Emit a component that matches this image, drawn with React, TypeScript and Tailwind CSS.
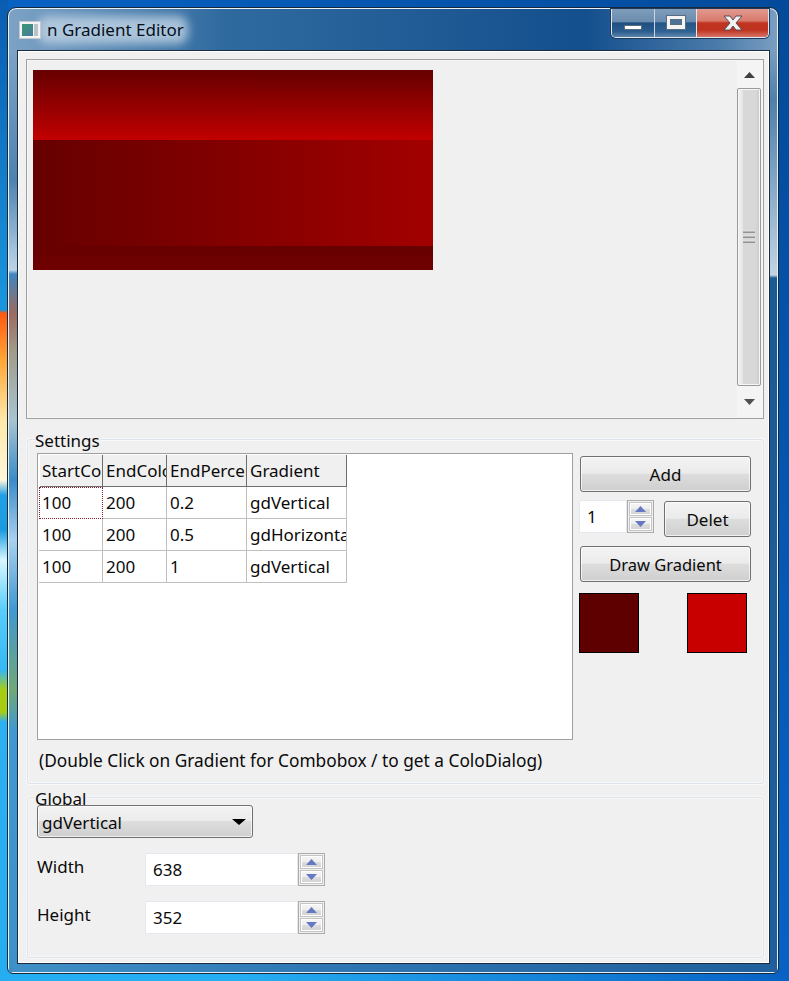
const rows = [
  ['100', '200', '0.2', 'gdVertical'],
  ['100', '200', '0.5', 'gdHorizontal'],
  ['100', '200', '1', 'gdVertical'],
];
const headers = ['StartColor', 'EndColor', 'EndPercent', 'Gradient'];
const colWidths = ['w-[64px]', 'w-[64px]', 'w-[80px]', 'w-[100px]'];
const headerWidths = ['w-[63px] pl-[2px]', 'w-[64px] pl-[3px]', 'w-[80px] pl-[3px]', 'w-[100px] pl-[3px]'];

const btnBg = 'bg-[linear-gradient(#f3f3f3,#ebebeb_48%,#dddddd_50%,#cfcfcf)] border border-[#707070] rounded-[3px] shadow-[inset_0_0_0_1px_#ffffffb0]';

function Button({ label, className }: { label: string; className: string }) {
  return <button className={`${btnBg} flex items-center justify-center pt-[2px] ${className}`}>{label}</button>;
}

function SpinButton({ up }: { up?: boolean }) {
  return (
    <div className="flex-1 flex items-center justify-center border border-[#c4c4c4] bg-[linear-gradient(#f6f6f6,#eeeeee_48%,#dddddd_50%,#d2d2d2)] shadow-[inset_0_0_0_1px_#ffffff]">
      <svg width="11" height="6" viewBox="0 0 11 6">
        <path d={up ? 'M5.5 0 L11 6 L0 6 Z' : 'M0 0 L11 0 L5.5 6 Z'} fill="#6478c4" />
      </svg>
    </div>
  );
}

function Spin({ value, className, boxWidth }: { value: string; className: string; boxWidth: string }) {
  return (
    <div className={`flex h-[33px] ${className}`}>
      <div className="flex-1 bg-white border border-[#e3e9ef] rounded-l-[2px] pl-[7px] leading-[31px]">{value}</div>
      <div className={`${boxWidth} flex flex-col border border-[#ababab] p-px gap-px`}>
        <SpinButton up />
        <SpinButton />
      </div>
    </div>
  );
}

function Group({ title, className, children }: { title: string; className: string; children: React.ReactNode }) {
  return (
    <div className={`relative ml-px border border-[#dce3ea] rounded-[3px] shadow-[inset_0_0_0_1px_#f8f8f8,0_0_0_1px_#f8f8f8] ${className}`}>
      <span className="absolute left-[7px] top-[-10px] bg-[#f0f0f0] pr-[1px] leading-[22px]">{title}</span>
      {children}
    </div>
  );
}

function Table() {
  return (
    <div className="w-[536px] h-[287px] border border-[#a0a0a0] bg-white p-px">
      <div className="flex h-[32px] ml-px">
        {headers.map((h, i) => (
          <div
            key={h}
            className={`${headerWidths[i]} bg-[#f0f0f0] border-r border-b border-[#6e6e6e] pr-[2px] leading-[31px] overflow-hidden whitespace-nowrap`}
          >
            {h}
          </div>
        ))}
      </div>
      {rows.map((r, ri) => (
        <div key={ri} className="flex h-[32px]">
          {r.map((c, ci) => (
            <div
              key={ci}
              className={`${colWidths[ci]} border-r border-b pr-[2px] overflow-hidden whitespace-nowrap ${
                ri === 0 && ci === 0
                  ? 'border-l border-t border-dotted border-[#8a2030] pl-[2px] leading-[30px]'
                  : 'border-[#c0c0c0] pl-[3px] leading-[31px]'
              }`}
            >
              {c}
            </div>
          ))}
        </div>
      ))}
    </div>
  );
}

function Scrollbar() {
  return (
    <div className="w-[25px] flex flex-col items-start bg-[#f4f4f4]">
      <div className="h-[28px] w-[24px] flex items-center justify-center pt-[2px]">
        <svg width="11" height="6" viewBox="0 0 11 6"><path d="M5.5 0 L11 6 L0 6 Z" fill="#404040" /></svg>
      </div>
      <div className="relative w-[24px] h-[298px] border border-[#9a9a9a] rounded-[2px] bg-[linear-gradient(to_right,#f2f2f2,#e8e8e8_20%,#d8d8d8_25%,#d8d8d8_80%,#c8c8c8)] shadow-[inset_0_0_0_1px_#f6f6f6] flex items-center justify-center">
        <div className="w-[12px] flex flex-col gap-[2px] pb-[1px]">
          <div className="h-[3px] bg-[linear-gradient(#f0f0f0,#808080)]" />
          <div className="h-[3px] bg-[linear-gradient(#f0f0f0,#808080)]" />
          <div className="h-[3px] bg-[linear-gradient(#f0f0f0,#808080)]" />
        </div>
      </div>
      <div className="flex-1 w-[24px] flex items-center justify-center">
        <svg width="11" height="6" viewBox="0 0 11 6"><path d="M0 0 L11 0 L5.5 6 Z" fill="#505050" /></svg>
      </div>
    </div>
  );
}

function WindowButtons() {
  return (
    <div className="flex h-[29px] w-[158px] border border-t-0 border-[#dfe8f0] rounded-b-[5px] overflow-hidden shadow-[0_0_0_1px_#1c3a5c]">
      <div className="w-[43px] border-r border-[#c8d4e0] flex items-end justify-center pb-[7px] bg-[linear-gradient(#7f9dbb,#6a8cae_45%,#1e4f80_50%,#2a5c8e_80%,#5d83a8)]">
        <div className="w-[18px] h-[5px] bg-white border border-[#5a6c80]" />
      </div>
      <div className="w-[42px] border-r border-[#e0e8f0] flex items-center justify-center pb-[1px] bg-[linear-gradient(#7f9dbb,#6a8cae_45%,#235686_50%,#2f6192_80%,#6288ac)]">
        <div className="w-[20px] h-[15px] bg-[#f4f4f4] border border-[#5a6c80] p-[3px] pb-[4px]">
          <div className="w-full h-full bg-[#4a7196] border border-[#5a6c80]" />
        </div>
      </div>
      <div className="flex-1 flex items-center justify-center bg-[linear-gradient(#e29a90,#d87a6c_42%,#c03420_50%,#be3320_75%,#d87468)]">
        <svg width="20" height="16" viewBox="0 0 20 16">
          <path
            d="M1 1 H7 L10 5 L13 1 H19 L13 8 L19 15 H13 L10 11 L7 15 H1 L7 8 Z"
            fill="#f2f2f2"
            stroke="#5a4a58"
            strokeWidth="1"
          />
        </svg>
      </div>
    </div>
  );
}

export default function App() {
  return (
    <div
      className="relative w-[789px] h-[981px] overflow-hidden pl-[7px] pt-[7px] text-[17px] text-[#0a0a0a] bg-[linear-gradient(to_bottom_left,#034a9a,#0862c4_50%,#26aef2_85%)]"
      style={{ fontFamily: '"Noto Sans", "Open Sans", sans-serif' }}
    >
      {/* wallpaper showing beside the window */}
      <div className="absolute left-0 top-0 w-[8px] h-[981px] bg-[linear-gradient(#0a5cb0_0px,#1a96de_310px,#ff5812_313px,#ffa636_360px,#ffe8a8_420px,#fff6dc_480px,#22a0e6_495px,#1a9be0_530px,#d8f6ff_560px,#58cdfa_610px,#34b8f4_670px,#a8cc14_690px,#a8cc14_712px,#2cb0f2_722px,#26acf0_981px)]" />

      <div className="relative w-[772px] h-[967px] rounded-t-[9px] rounded-b-[6px] border border-[#16283c] shadow-[inset_0_0_0_1px_#e8f0f8] bg-[linear-gradient(to_right,#7da3c6_0%,#2f6a9f_28%,#144f8e_75%,#4a7aa8_92%,#7a9fc2_100%)] flex flex-col overflow-hidden">
        {/* glass side strips */}
        <div className="absolute left-[1px] top-[42px] w-[8px] h-[922px] bg-[linear-gradient(#7da3c6_0px,#4d83b0_130px,#bcd4e8_220px,#3f86bf_224px,#9e6a60_264px,#a09a88_300px,#a8c4d0_370px,#3a8cc8_430px,#a8d0f0_490px,#4098d0_560px,#70a878_640px,#4098d0_680px,#3f90c8_922px)]" />
        <div className="absolute right-[1px] top-[42px] w-[9px] h-[922px] bg-[linear-gradient(#7a9fc0_0px,#4f7fab_50px,#c0d4e4_225px,#1c5a94_228px,#1f5f9c_922px)]" />
        <div className="absolute left-[1px] bottom-[1px] w-[768px] h-[8px] bg-[linear-gradient(to_right,#3f90c8,#2f78b4_40%,#1f5f9c)]" />

        <div className="relative h-[42px] flex justify-between shrink-0">
          <div className="relative flex items-center pl-[11px] pt-[2px] h-[42px]">
            <div className="absolute left-[30px] top-[8px] w-[150px] h-[28px] rounded-[10px] bg-[#bcd0e2d8] blur-[5px]" />
            <div className="relative w-[22px] h-[18px] border border-[#c8c8c8] bg-[#f4f4f4] p-[2px] flex gap-[1px]">
              <div className="w-[11px] bg-[linear-gradient(135deg,#3a9a70,#4a7aa0)]" />
              <div className="flex-1 bg-[#b8c4c8]" />
            </div>
            <span className="relative ml-[6px] text-[17px] text-[#04101c]">n Gradient Editor</span>
          </div>
          <div className="mr-[9px] pt-px">
            <WindowButtons />
          </div>
        </div>

        <div className="relative ml-[9px] w-[753px] h-[914px] border border-[#1c2c40] bg-[#f0f0f0] shadow-[inset_0_0_0_1px_#ffffff] pl-[8px] pr-[5px] pt-[8px]">
          <div className="h-[360px] border border-[#a0a0a0] flex justify-between pr-px shadow-[inset_0_0_0_1px_#f6f6f6]">
            <div className="pl-[6px] pt-[10px]">
              <div className="w-[400px] h-[200px] flex flex-col">
                <div className="h-[70px] bg-linear-to-b from-[#660000] to-[#c20000]" />
                <div className="h-[106px] bg-linear-to-r from-[#660000] to-[#a20000]" />
                <div className="h-[24px] bg-linear-to-b from-[#660000] to-[#700000]" />
              </div>
            </div>
            <Scrollbar />
          </div>

          <Group title="Settings" className="mt-[20px] h-[345px] pl-[9px] pt-[13px]">
            <div className="flex">
              <div>
                <Table />
                <p className="mt-[9px] ml-[2px] text-[17.3px] leading-[24px] whitespace-nowrap">
                  (Double Click on Gradient for Combobox / to get a ColoDialog)
                </p>
              </div>
              <div className="ml-[6px] w-[172px] flex flex-col items-start pt-[3px]">
                <Button label="Add" className="ml-px w-[171px] h-[36px]" />
                <div className="flex mt-[8px] h-[37px] items-start">
                  <Spin value="1" className="w-[75px]" boxWidth="w-[27px]" />
                  <Button label="Delet" className="ml-[10px] mt-px w-[87px] h-[36px]" />
                </div>
                <Button label="Draw Gradient" className="ml-px mt-[9px] w-[171px] h-[36px] text-[16.5px]" />
                <div className="mt-[11px] w-[168px] flex justify-between">
                  <div className="w-[60px] h-[60px] border border-black bg-[#5f0000]" />
                  <div className="w-[60px] h-[60px] border border-black bg-[#c80000]" />
                </div>
              </div>
            </div>
          </Group>

          <Group title="Global" className="mt-[13px] h-[161px] pl-[9px] pt-[7px]">
            <div className={`${btnBg} relative w-[216px] h-[33px] flex items-center justify-between pl-[4px] pr-[5px]`}>
              <span className="pt-[3px]">gdVertical</span>
              <svg width="14" height="6" viewBox="0 0 14 6" className="mr-px">
                <path d="M0 0 L14 0 L7 6 Z" fill="#000" />
              </svg>
            </div>
            <div className="flex mt-[15px]">
              <span className="w-[108px] leading-[28px]">Width</span>
              <Spin value="638" className="w-[180px]" boxWidth="w-[27px]" />
            </div>
            <div className="flex mt-[15px]">
              <span className="w-[108px] leading-[28px]">Height</span>
              <Spin value="352" className="w-[180px]" boxWidth="w-[27px]" />
            </div>
          </Group>
        </div>
      </div>
    </div>
  );
}
